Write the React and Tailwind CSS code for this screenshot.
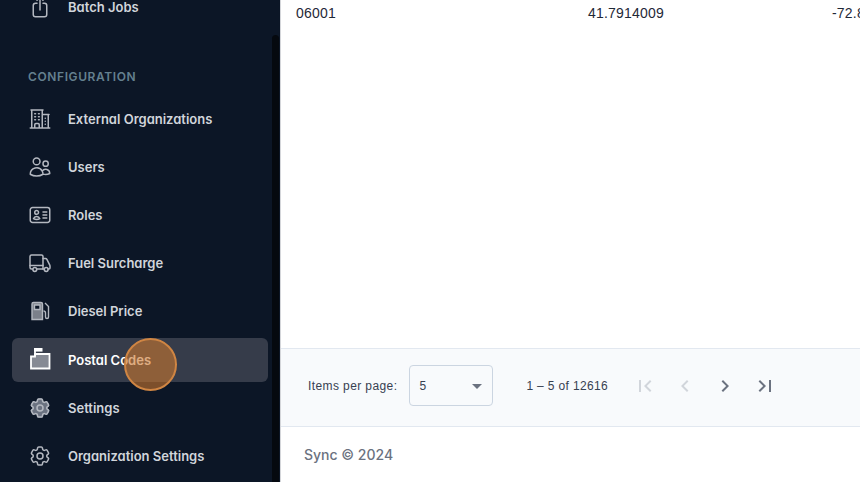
import React from "react";
import {
  HiOutlineArrowUpOnSquare,
  HiOutlineBuildingOffice2,
  HiOutlineUsers,
  HiOutlineIdentification,
  HiOutlineCog6Tooth,
} from "react-icons/hi2";

const Truck = ({ className }) => (
  <svg viewBox="0 0 24 24" className={className} fill="none" stroke="currentColor" strokeWidth="1.5" strokeLinejoin="round" strokeLinecap="round">
    <path d="M4.500 18H3.500A1.500 1.500 0 0 1 2 16.500V5.500A1.500 1.500 0 0 1 3.500 4h10A1.500 1.500 0 0 1 15 5.500V18H9" />
    <path d="M2 14.500h13" />
    <path d="M15 7.500h2.500c.6 0 1.100.3 1.400.9l3 6c.1.300.100.500.100.800V17a1 1 0 0 1-1 1h-1" />
    <path d="M15 18h1" />
    <circle cx="6.800" cy="18.500" r="1.900" />
    <circle cx="18.200" cy="18.500" r="1.900" />
  </svg>
);

const Fuel = ({ className }) => (
  <svg viewBox="0 0 24 24" className={className} fill="none" stroke="currentColor" strokeWidth="1.400">
    <path d="M4 20.500V5a1.500 1.500 0 0 1 1.500-1.500h7.500A1.500 1.500 0 0 1 14.500 5v15.500H4Z" fill="#7b808a" />
    <path d="M6.500 6h5.500v4.500H6.500z" fill="#0c1626" />
    <path d="M17 4l3.500 3.500V18a1.500 1.500 0 0 1-3 0v-4a2 2 0 0 0-2-2" />
  </svg>
);

const Postal = ({ className }) => (
  <svg viewBox="0 0 24 24" className={className} fill="none" stroke="currentColor" strokeWidth="1.800" strokeLinejoin="miter">
    <path d="M3 8.500H7V6H21.500V20.500H3Z" fill="#868a94" />
    <path d="M6.100 0H14.500V3.600H6.100Z" fill="currentColor" stroke="none" />
    <path d="M7 0v8" />
  </svg>
);

const FirstPage = ({ className }) => (
  <svg viewBox="0 0 24 24" className={className} fill="currentColor"><path d="M18.410 16.590 13.820 12l4.590-4.590L17 6l-6 6 6 6zM6 6h2v12H6z" /></svg>
);
const Prev = ({ className }) => (
  <svg viewBox="0 0 24 24" className={className} fill="currentColor"><path d="M15.410 7.410 14 6l-6 6 6 6 1.410-1.410L10.830 12z" /></svg>
);
const Next = ({ className }) => (
  <svg viewBox="0 0 24 24" className={className} fill="currentColor"><path d="M10 6 8.590 7.410 13.170 12l-4.580 4.590L10 18l6-6z" /></svg>
);
const LastPage = ({ className }) => (
  <svg viewBox="0 0 24 24" className={className} fill="currentColor"><path d="M5.590 7.410 10.180 12l-4.590 4.590L7 18l6-6-6-6zM16 6h2v12h-2z" /></svg>
);

const SolidCog = ({ className }) => (
  <span className={`relative ${className}`}>
    <HiOutlineCog6Tooth className="w-6 h-6 text-[#6b7280] absolute inset-0 fill-[#6b7280]" />
    <HiOutlineCog6Tooth className="w-6 h-6 absolute inset-0" />
  </span>
);

function Item({ icon: Icon, label, active }) {
  return (
    <div
      className={`flex items-center h-11 shrink-0 mb-1 px-4 rounded-md gap-4 text-[13px] font-semibold leading-5 ${
        active ? "mt-px bg-[#363c4a] text-white" : "text-[#d1d5db]"
      }`}
    >
      <Icon className={`w-6 h-6 shrink-0 ${active ? "text-white" : "text-[#b4b8c0]"}`} />
      <span>{label}</span>
    </div>
  );
}

export default function App() {
  return (
    <div className="relative flex h-[482px] w-[860px] overflow-hidden bg-white" style={{ fontFamily: "Inter, sans-serif" }}>
      <aside className="relative w-[281px] shrink-0 bg-[#0c1626] border-r border-[#d4d6da] pl-3 pr-3 [font-feature-settings:'cv11']">
        <div className="flex flex-col w-[256px] -mt-[15px]">
          <Item icon={HiOutlineArrowUpOnSquare} label="Batch Jobs" />
          <div className="pl-4 pt-[34px] pb-[10px] text-xs leading-5 font-semibold tracking-[0.05em] text-[#64808f]">
            CONFIGURATION
          </div>
          <Item icon={HiOutlineBuildingOffice2} label="External Organizations" />
          <Item icon={HiOutlineUsers} label="Users" />
          <Item icon={HiOutlineIdentification} label="Roles" />
          <Item icon={Truck} label="Fuel Surcharge" />
          <Item icon={Fuel} label="Diesel Price" />
          <Item icon={Postal} label="Postal Codes" active />
          <Item icon={SolidCog} label="Settings" />
          <Item icon={HiOutlineCog6Tooth} label="Organization Settings" />
        </div>
        <div className="absolute right-[1px] top-[35px] bottom-0 w-[7px] rounded-t bg-[#05090f]" />
      </aside>

      <main className="flex-1 flex flex-col min-w-0 text-[#1f2937]">
        <div className="flex-1 min-h-0 overflow-hidden" style={{ fontFamily: '"Liberation Sans", sans-serif' }}>
          <div className="flex text-sm leading-5 pl-[15px] pt-[3px] tracking-[0.2px] whitespace-nowrap">
            <span className="w-[292px] shrink-0">06001</span>
            <span className="w-[244px] shrink-0">41.7914009</span>
            <span>-72.8</span>
          </div>
        </div>
        <div
          className="h-[79px] shrink-0 bg-[#f8fafc] border-y border-[#e2e8f0] flex items-center pl-7 pb-1 text-xs text-[#374151]"
          style={{ fontFamily: '"Liberation Sans", sans-serif' }}
        >
          <span className="tracking-[0.4px] -ml-px">Items per page:</span>
          <div className="ml-3 w-[84px] h-[41px] border border-[#cbd5e1] rounded flex items-center justify-between pl-[9px] pr-[10px]">
            <span>5</span>
            <span className="w-0 h-0 border-x-[5px] border-x-transparent border-t-[5px] border-t-[#6b7280] mt-0.5" />
          </div>
          <span className="ml-[33px] tracking-[0.35px]">1 – 5 of 12616</span>
          <div className="flex items-center ml-[25px] gap-4">
            <FirstPage className="w-6 h-6 text-[#d1d5db]" />
            <Prev className="w-6 h-6 text-[#d1d5db]" />
            <Next className="w-6 h-6 text-[#6b7280]" />
            <LastPage className="w-6 h-6 text-[#6b7280]" />
          </div>
        </div>
        <div className="h-[55px] shrink-0 flex items-center pl-[23px] text-sm font-medium text-[#6b7280]">
          Sync © 2024
        </div>
      </main>

      <div className="absolute left-[124px] top-[338px] w-[53px] h-[53px] rounded-full border-2 border-[#cf8543] bg-[#c9762e]/60" />
    </div>
  );
}
